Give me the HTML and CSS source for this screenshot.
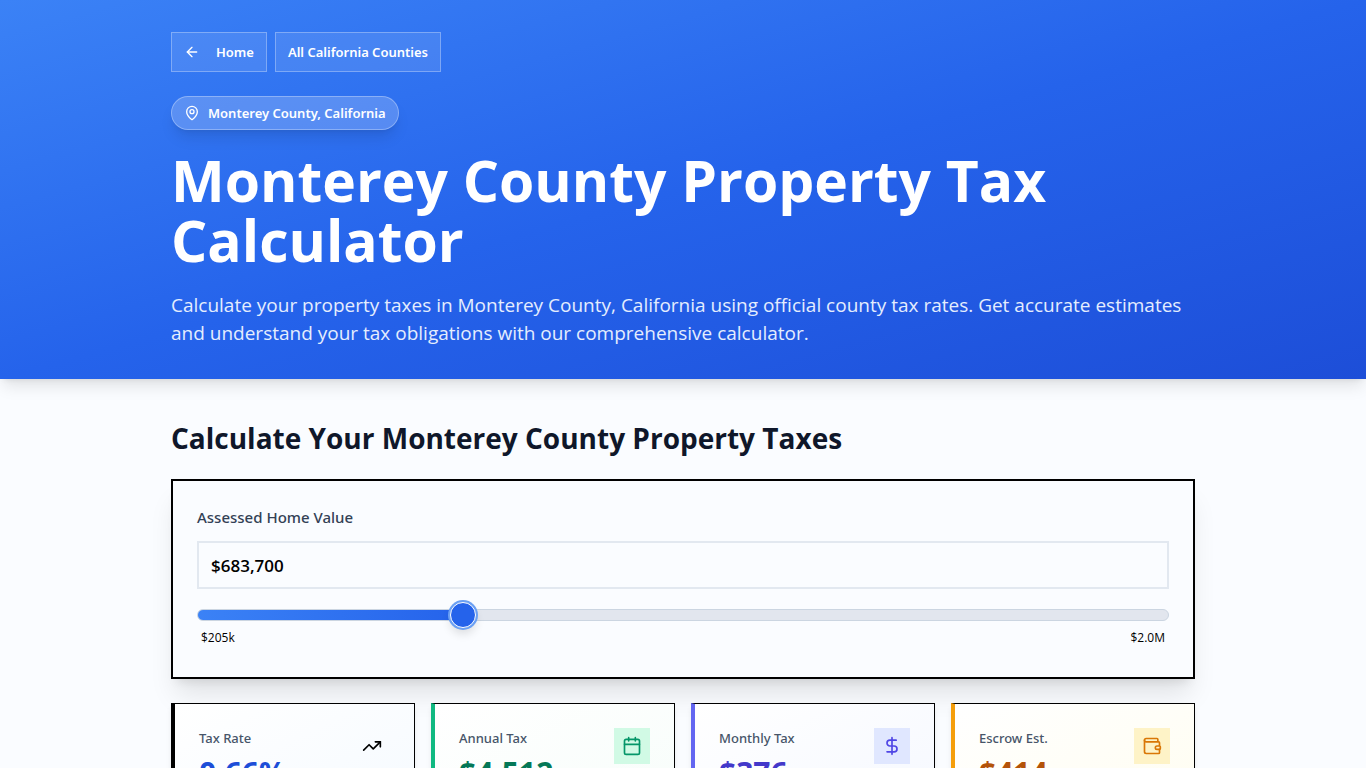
FILE: index.html
```html
<!DOCTYPE html>
<html lang="en">
<head>
<meta charset="utf-8">
<meta name="viewport" content="width=device-width, initial-scale=1">
<title>Monterey County Property Tax Calculator</title>
<link rel="stylesheet" href="styles.css">
</head>
<body>
<header class="hero">
  <div class="container">
    <nav class="nav">
      <a class="nav-link nav-home" href="#"><svg class="icon" viewBox="0 0 24 24"><path d="m12 19-7-7 7-7"/><path d="M19 12H5"/></svg>Home</a>
      <a class="nav-link" href="#">All California Counties</a>
    </nav>
    <div class="badge"><svg class="icon" viewBox="0 0 24 24"><path d="M20 10c0 4.993-5.539 10.193-7.399 11.799a1 1 0 0 1-1.202 0C9.539 20.193 4 14.993 4 10a8 8 0 0 1 16 0"/><circle cx="12" cy="10" r="3"/></svg>Monterey County, California</div>
    <h1 class="title">Monterey County Property Tax Calculator</h1>
    <p class="lead">Calculate your property taxes in Monterey County, California using official county tax rates. Get accurate estimates and understand your tax obligations with our comprehensive calculator.</p>
  </div>
</header>
<main class="container main">
  <h2 class="section-title">Calculate Your Monterey County Property Taxes</h2>
  <section class="panel">
    <label class="field-label" for="home-value">Assessed Home Value</label>
    <input class="field" id="home-value" type="text" value="$683,700">
    <input class="slider" type="range" min="205000" max="2000000" step="100" value="683700" aria-label="Assessed home value slider" style="--fill: 27%">
    <div class="range-labels"><span>$205k</span><span>$2.0M</span></div>
  </section>
  <section class="stats">
    <article class="stat stat-rate">
      <div><p class="stat-label">Tax Rate</p><p class="stat-value">0.66%</p></div>
      <span class="stat-icon"><svg class="icon" viewBox="0 0 24 24"><path d="M16 7h6v6"/><path d="m22 7-8.500 8.500-5-5L2 17"/></svg></span>
    </article>
    <article class="stat stat-annual">
      <div><p class="stat-label">Annual Tax</p><p class="stat-value">$4,512</p></div>
      <span class="stat-icon"><svg class="icon" viewBox="0 0 24 24"><path d="M8 2v4M16 2v4"/><rect width="18" height="18" x="3" y="4" rx="2"/><path d="M3 10h18"/></svg></span>
    </article>
    <article class="stat stat-monthly">
      <div><p class="stat-label">Monthly Tax</p><p class="stat-value">$376</p></div>
      <span class="stat-icon"><svg class="icon" viewBox="0 0 24 24"><path d="M12 2v20"/><path d="M17 5H9.500a3.500 3.500 0 0 0 0 7h5a3.500 3.500 0 0 1 0 7H6"/></svg></span>
    </article>
    <article class="stat stat-escrow">
      <div><p class="stat-label">Escrow Est.</p><p class="stat-value">$414</p></div>
      <span class="stat-icon"><svg class="icon" viewBox="0 0 24 24"><path d="M19 7V4a1 1 0 0 0-1-1H5a2 2 0 0 0 0 4h15a1 1 0 0 1 1 1v4h-3a2 2 0 0 0 0 4h3a1 1 0 0 0 1-1v-2a1 1 0 0 0-1-1"/><path d="M3 5v14a2 2 0 0 0 2 2h15a1 1 0 0 0 1-1v-4"/></svg></span>
    </article>
  </section>
</main>
</body>
</html>
```
FILE: styles.css
```css
* { box-sizing: border-box; }
body {
  margin: 0;
  background: #fafcff;
  color: #000;
  font-family: "Segoe UI", "Open Sans", "Noto Sans", sans-serif;
}
h1, h2, p { margin: 0; }
.container { max-width: 1024px; margin: 0 auto; }
.icon {
  width: 20px;
  height: 20px;
  fill: none;
  stroke: currentColor;
  stroke-width: 2;
  stroke-linecap: round;
  stroke-linejoin: round;
}
.hero {
  padding: 32px 0;
  color: #fff;
  background: linear-gradient(to bottom right, #3b82f6, #2563eb 50%, #1d4ed8);
  box-shadow: 0 10px 15px -3px rgb(0 0 0 / 10%), 0 4px 6px -4px rgb(0 0 0 / 10%);
}
.nav { display: flex; gap: 8px; margin-bottom: 24px; }
.nav-link {
  display: flex;
  align-items: center;
  height: 40px;
  padding: 0 12px;
  border: 1px solid rgb(255 255 255 / 30%);
  background: rgb(255 255 255 / 10%);
  color: #fff;
  font-size: 13px;
  font-weight: 600;
  text-decoration: none;
}
.nav-link, .badge { font-family: "Segoe UI", "Noto Sans", sans-serif; }
.nav-home { gap: 16px; }
.nav .icon, .badge .icon { width: 16px; height: 16px; }
.badge {
  display: flex;
  align-items: center;
  gap: 8px;
  width: fit-content;
  height: 34px;
  margin-bottom: 20px;
  padding: 0 12px;
  border: 1px solid rgb(255 255 255 / 30%);
  border-radius: 17px;
  background: rgb(255 255 255 / 20%);
  box-shadow: 0 10px 15px -3px rgb(0 0 0 / 10%), 0 4px 6px -4px rgb(0 0 0 / 10%);
  font-size: 13px;
  font-weight: 600;
}
.title { margin-bottom: 21px; font-size: 57px; line-height: 60px; font-weight: 700; }
.lead { color: #e4edfe; font-size: 19px; line-height: 28px; }
.main { padding: 41px 0; }
.section-title {
  margin-bottom: 23px;
  color: #0f172a;
  font-size: 28px;
  line-height: 36px;
  font-weight: 700;
}
.panel {
  display: flex;
  flex-direction: column;
  margin-bottom: 24px;
  padding: 24px 24px 31px;
  border: 2px solid #000;
  background: #fafcff;
  box-shadow: 0 20px 25px -5px rgb(0 0 0 / 10%), 0 8px 10px -6px rgb(0 0 0 / 10%);
}
.field-label {
  margin-bottom: 12px;
  color: #334155;
  font-family: "Segoe UI", "Noto Sans", sans-serif;
  font-size: 15px;
  line-height: 24px;
  font-weight: 500;
}
.field {
  width: 100%;
  height: 48px;
  margin-bottom: 20px;
  padding: 0 12px;
  border: 2px solid #e2e8f0;
  background: transparent;
  color: #000;
  font-family: inherit;
  font-size: 17px;
  font-weight: 600;
}
.slider {
  width: 100%;
  height: 12px;
  margin: 0 0 9px;
  border: 1px solid #cbd5e1;
  border-radius: 6px;
  appearance: none;
  background: linear-gradient(to right, #3b82f6, #2563eb) 0 / var(--fill) 100% no-repeat #e2e6ee;
}
.slider::-webkit-slider-thumb {
  width: 26px;
  height: 26px;
  border: 1px solid #fff;
  border-radius: 50%;
  appearance: none;
  background: #2563eb;
  box-shadow: 0 0 0 2px #6ba0f3, 0 6px 10px rgb(0 0 0 / 12%);
}
.range-labels {
  display: flex;
  justify-content: space-between;
  padding: 0 4px;
  font-size: 12px;
  line-height: 16px;
}
.stats { display: grid; grid-template-columns: repeat(4, 1fr); gap: 16px; }
.stat {
  display: flex;
  justify-content: space-between;
  align-items: flex-start;
  padding: 24px;
  border: 1px solid #000;
  border-left: 4px solid var(--edge);
  background: linear-gradient(to bottom right, #fff, var(--tint));
  box-shadow: 0 4px 6px -1px rgb(0 0 0 / 10%);
}
.stat-label {
  color: #475569;
  font-family: "Segoe UI", "Noto Sans", sans-serif;
  font-size: 13px;
  line-height: 20px;
  font-weight: 500;
}
.stat-value { margin-top: 5px; color: var(--ink); font-size: 30px; line-height: 40px; font-weight: 700; }
.stat-icon { display: flex; padding: 8px; background: var(--chip); color: var(--glyph); }
.stat-rate { --edge: #000; --tint: #f5faff; --ink: #1d4ed8; --chip: transparent; --glyph: #000; }
.stat-annual { --edge: #10b981; --tint: #f7fdfa; --ink: #047857; --chip: #d1fae5; --glyph: #059669; }
.stat-monthly { --edge: #6366f1; --tint: #f5f8ff; --ink: #4338ca; --chip: #e0e7ff; --glyph: #4f46e5; }
.stat-escrow { --edge: #f59e0b; --tint: #fffdf0; --ink: #b45309; --chip: #fef3c7; --glyph: #d97706; }
```
